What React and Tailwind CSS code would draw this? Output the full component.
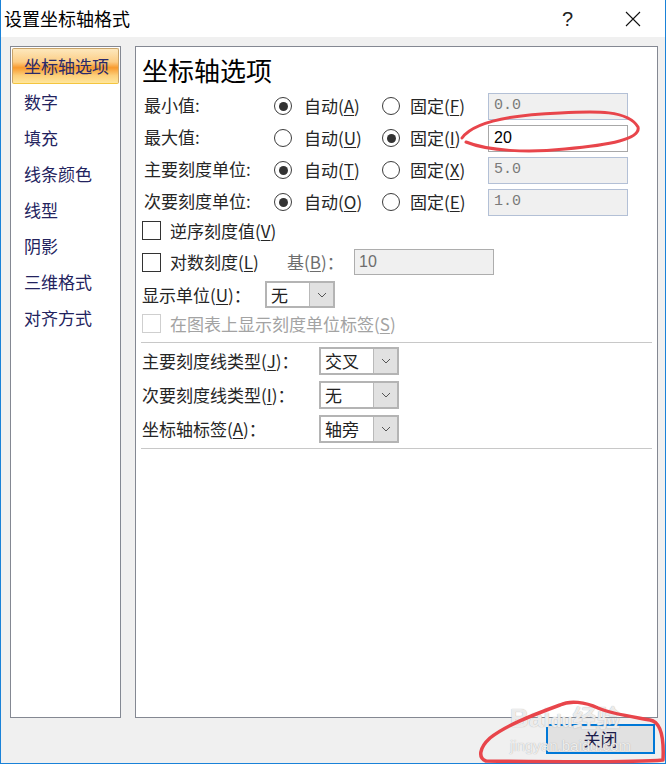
import React from 'react';

const navItems = ['坐标轴选项', '数字', '填充', '线条颜色', '线型', '阴影', '三维格式', '对齐方式'];

function Radio({ checked }) {
  return (
    <span className="w-[18px] h-[18px] shrink-0 rounded-full border border-[#3c3c3c] bg-white flex items-center justify-center">
      {checked && <span className="w-[9px] h-[9px] rounded-full bg-[#333]" />}
    </span>
  );
}

function Checkbox({ disabled }) {
  return (
    <span
      className={
        disabled
          ? 'w-[19px] h-[19px] shrink-0 border border-[#cfcfcf] bg-white'
          : 'w-[19px] h-[19px] shrink-0 border border-[#333] bg-white'
      }
    />
  );
}

function Chevron() {
  return (
    <svg width="10" height="6" viewBox="0 0 10 6" fill="none">
      <path d="M1 1 L5 5 L9 1" stroke="#555" strokeWidth="1" />
    </svg>
  );
}

function Select({ value, className }) {
  return (
    <div className={'flex border-2 border-[#b4b4b4] bg-white ' + className}>
      <div className="flex-1 pl-[4px] flex items-center text-[17px] text-[#222]">{value}</div>
      <div className="w-[24px] bg-[#e1e1e1] border-l border-[#b9b9b9] flex items-center justify-center">
        <Chevron />
      </div>
    </div>
  );
}

function Key({ k }) {
  return (
    <>
      (<span className="underline underline-offset-2">{k}</span>)
    </>
  );
}

function ValueRow({ label, autoKey, fixedKey, auto, value, enabled }) {
  return (
    <div className="h-[32px] flex items-center pl-[8px]">
      <div className="w-[130px] text-[17px] text-[#262626] -mt-[3px]">{label}</div>
      <div className="w-[108px] flex items-center">
        <Radio checked={auto} />
        <span className="ml-[12px] text-[17px] text-[#262626]">
          自动<Key k={autoKey} />
        </span>
      </div>
      <div className="w-[106px] flex items-center">
        <Radio checked={!auto} />
        <span className="ml-[10px] text-[17px] text-[#262626]">
          固定<Key k={fixedKey} />
        </span>
      </div>
      {enabled ? (
        <div className="w-[140px] h-[27px] border border-[#a8a8a8] bg-white flex items-center pl-[5px] font-['Liberation_Sans',sans-serif] text-[16px] text-black">
          {value}
        </div>
      ) : (
        <div className="w-[140px] h-[27px] border border-[#b3c0d6] bg-[#f0f0f0] flex items-center pl-[5px] font-['Liberation_Mono',monospace] text-[15px] text-[#7a7a7a]">
          {value}
        </div>
      )}
    </div>
  );
}

function SelectRow({ label, value }) {
  return (
    <div className="h-[28px] flex items-center pl-[6px]">
      <div className="w-[177px] text-[17px] text-[#262626]">{label}</div>
      <Select value={value} className="w-[80px] h-[28px]" />
    </div>
  );
}

export default function App() {
  return (
    <div className="w-[667px] h-[765px] bg-white relative font-['Noto_Sans_CJK_SC',sans-serif]">
      <div className="w-[666px] h-[764px] border-l border-r border-b border-[#1a82d8] flex flex-col">
        {/* title bar */}
        <div className="h-[37px] bg-white flex items-center pl-[3px] shrink-0">
          <span className="text-[18px] text-black">设置坐标轴格式</span>
          <span className="ml-auto mr-[52px] text-[20px] text-[#222] font-['Liberation_Sans',sans-serif] font-light">?</span>
          <svg width="16" height="16" viewBox="0 0 16 16" className="mr-[24px]">
            <path d="M1 1 L15 15 M15 1 L1 15" stroke="#111" strokeWidth="1.1" />
          </svg>
        </div>

        {/* body */}
        <div className="flex-1 bg-[#f0f0f0] flex flex-col">
          <div className="flex pl-[9px] pt-[9px] gap-[14px]">
            {/* left nav */}
            <div className="w-[111px] h-[672px] border border-[#848892] bg-white p-[1px]">
              {navItems.map((item, i) => (
                <div
                  key={item}
                  className={
                    i === 0
                      ? 'h-[36px] flex items-center pl-[11px] text-[17px] text-[#2a2a6a] border border-[#c9a46a] border-b-[#f4c53e] rounded-[2px] bg-[linear-gradient(to_bottom,#fde8bd_0%,#fccd85_38%,#f89a2e_55%,#fccf7a_78%,#ffe69c_100%)]'
                      : 'h-[36px] flex items-center pl-[12px] text-[17px] text-[#23235e]'
                  }
                >
                  {item}
                </div>
              ))}
            </div>

            {/* right panel */}
            <div className="w-[523px] h-[672px] border border-[#848892] bg-white">
              <div className="pl-[6px] pt-[6px] h-[42px] text-[26px] leading-[34px] text-black">坐标轴选项</div>
              <div className="mt-[1px]">
                <ValueRow label="最小值:" autoKey="A" fixedKey="F" auto value="0.0" />
                <ValueRow label="最大值:" autoKey="U" fixedKey="I" auto={false} value="20" enabled />
                <ValueRow label="主要刻度单位:" autoKey="T" fixedKey="X" auto value="5.0" />
                <ValueRow label="次要刻度单位:" autoKey="O" fixedKey="E" auto value="1.0" />
              </div>

              <div className="pl-[6px]">
                <div className="mt-[3px] h-[19px] flex items-center">
                  <Checkbox />
                  <span className="ml-[9px] text-[17px] text-[#262626]">
                    逆序刻度值<Key k="V" />
                  </span>
                </div>
                <div className="mt-[9px] h-[26px] flex items-center">
                  <div className="w-[145px] flex items-center">
                    <Checkbox />
                    <span className="ml-[9px] text-[17px] text-[#262626]">
                      对数刻度<Key k="L" />
                    </span>
                  </div>
                  <span className="w-[67px] text-[17px] text-[#6d6d6d]">
                    基<Key k="B" />：
                  </span>
                  <div className="w-[140px] h-[26px] border border-[#adadad] bg-[#f0f0f0] flex items-center pl-[4px] font-['Liberation_Sans',sans-serif] text-[16px] text-[#6d6d6d]">
                    10
                  </div>
                </div>
                <div className="mt-[6px] h-[27px] flex items-center">
                  <span className="w-[123px] text-[17px] text-[#262626]">
                    显示单位<Key k="U" />：
                  </span>
                  <Select value="无" className="w-[70px] h-[27px]" />
                </div>
                <div className="mt-[6px] h-[19px] flex items-center">
                  <Checkbox disabled />
                  <span className="ml-[9px] text-[17px] text-[#a3a3a3]">
                    在图表上显示刻度单位标签<Key k="S" />
                  </span>
                </div>
              </div>

              <div className="mt-[9px] ml-[5px] mr-[5px] h-px bg-[#c8c8c8]" />

              <div className="mt-[4px] flex flex-col gap-[6px]">
                <SelectRow label={<>主要刻度线类型<Key k="J" />：</>} value="交叉" />
                <SelectRow label={<>次要刻度线类型<Key k="I" />：</>} value="无" />
                <SelectRow label={<>坐标轴标签<Key k="A" />：</>} value="轴旁" />
              </div>

              <div className="mt-[5px] ml-[5px] mr-[5px] h-px bg-[#c8c8c8]" />
            </div>
          </div>

          {/* footer */}
          <div className="flex justify-end pr-[10px] pt-[6px]">
            <button className="w-[109px] h-[30px] border-2 border-[#0078d7] bg-[#e1e1e1] text-[17px] text-[#1c1c4a] flex items-center justify-center">
              关闭
            </button>
          </div>
        </div>
      </div>

      {/* watermark */}
      <div className="absolute left-[510px] top-[703px] pointer-events-none text-white/80 font-['Liberation_Sans',sans-serif] [text-shadow:0_0_1px_#9a9a9a]">
        <div className="text-[26px] font-bold leading-[28px]">
          Bai<span className="text-[18px]">du</span>
          <span className="font-['Noto_Sans_CJK_SC',sans-serif] text-[24px]">经验</span>
        </div>
        <div className="text-[15px] leading-[18px] mt-[2px]">jingyan.baidu.com</div>
      </div>

      {/* red annotations */}
      <svg className="absolute inset-0 pointer-events-none" width="667" height="765" viewBox="0 0 667 765" fill="none">
        <path
          d="M462 138 C472 124 505 115 560 113 C596 111 628 110 638 127 C641 139 610 145 565 149 C528 153 488 151 466 142"
          stroke="#e8454b"
          strokeWidth="3"
          strokeLinecap="round"
        />
        <path
          d="M560 705 C570 700 585 702 598 708 C612 714 628 716 650 720 C662 722 664 740 663 760 C640 762 560 762 486 761 C478 758 479 748 490 738 C505 726 530 716 560 705"
          stroke="#e8454b"
          strokeWidth="3.5"
          strokeLinecap="round"
          strokeLinejoin="round"
        />
      </svg>
    </div>
  );
}
